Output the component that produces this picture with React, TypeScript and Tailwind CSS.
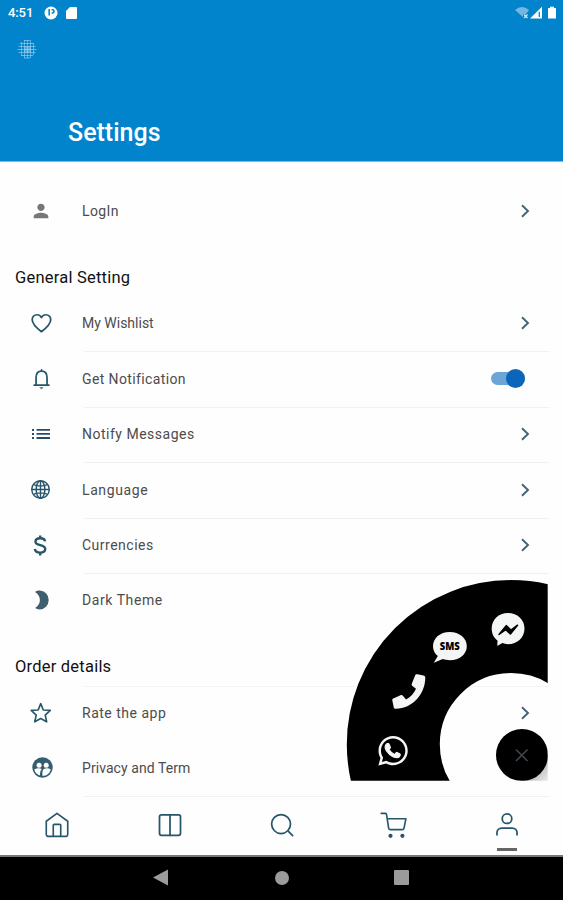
import type { ReactNode } from "react";
import { MdPerson } from "react-icons/md";

const ink = "#27566b";

function Chevron() {
  return (
    <svg className="mr-[33px] h-[14px] w-[9px]" viewBox="0 0 9 14" fill="none" stroke="#3f6474" strokeWidth="1.9">
      <path d="M1 1.2 7 7 1 12.8" />
    </svg>
  );
}

function Toggle() {
  return (
    <div className="mr-[38px] flex h-[19px] w-[34px] items-center rounded-full">
      <div className="flex h-[13px] w-[34px] items-center justify-end rounded-full bg-[#6da5d6]">
        <div className="h-[19px] w-[19px] shrink-0 rounded-full bg-[#0b66ba]" />
      </div>
    </div>
  );
}

function Row({ icon, label, end, height, width, line = true }: { icon: ReactNode; label: string; end?: ReactNode; height: string; width: string; line?: boolean }) {
  return (
    <div className={`flex ${height}`}>
      <div className="flex w-[82px] shrink-0 items-center justify-center pb-[3px]">{icon}</div>
      <div className={`ml-[2px] mr-[14px] flex flex-1 items-center justify-between border-b pb-[2px] ${line ? "border-[#f1f1f1]" : "border-transparent"}`}>
        <span className={`-ml-[2px] whitespace-nowrap text-[14px] leading-none text-[#4c4c4c] ${width}`}>{label}</span>
        <div className="-mr-[14px]">{end}</div>
      </div>
    </div>
  );
}

function Line({ children, size = "h-[22px] w-[22px]", sw = 1.6 }: { children: ReactNode; size?: string; sw?: number }) {
  return (
    <svg className={size} viewBox="0 0 24 24" fill="none" stroke={ink} strokeWidth={sw} strokeLinecap="round" strokeLinejoin="round">
      {children}
    </svg>
  );
}

const Heart = () => (
  <Line sw={1.9}>
    <path d="M12.5 21.5 C7 17.2 2.4 13.1 2.4 8.4 A5.2 5.2 0 0 1 7.7 3 C9.8 3 11.5 4.2 12.5 6 C13.5 4.2 15.2 3 17.3 3 A5.2 5.2 0 0 1 22.6 8.4 C22.6 13.1 18 17.2 12.5 21.5Z" />
  </Line>
);
const Bell = () => (
  <Line sw={1.9}>
    <path d="M4.6 18.8h16 M6.6 18.8 V10.5 C6.6 6.2 8.9 3.4 12.6 3.4 S18.6 6.2 18.6 10.5 V18.8 M12.6 3.4V2" />
    <path d="M11 21.4h3.2l-1.6 1.3z" fill={ink} strokeWidth=".5" />
  </Line>
);
const List = () => (
  <svg className="h-[12px] w-[18px]" viewBox="0 0 18 12" fill="#284c70">
    <path d="M0 1h2v2H0zM0 5h2v2H0zM0 9h2v2H0zM4.5 1H18v1.7H4.5zM4.5 5H18v1.7H4.5zM4.5 9H18v2H4.5z" />
  </svg>
);
const Globe = () => (
  <Line size="mr-px h-[21px] w-[21px]" sw={1.6}>
    <circle cx="12" cy="12" r="10" />
    <ellipse cx="12" cy="12" rx="5" ry="10" />
    <path d="M12 2v20M2 12h20M4 6.5c5 2 11 2 16 0M4 17.5c5-2 11-2 16 0" />
  </Line>
);
const Dollar = () => (
  <svg className="mr-[2px] h-[21px] w-[14px]" viewBox="0 0 14 21" fill="none" stroke={ink} strokeWidth="2.4">
    <path d="M12 6.4C11.8 4.3 10 3.3 7.2 3.3 4.6 3.3 2.5 4.5 2.5 6.7 2.5 11.5 12.2 8.8 12.2 14 12.2 16.4 10 17.6 7.2 17.6 4.2 17.6 2.2 16.3 1.8 14" />
    <path d="M7.2 .4v3.2M7.2 17v3.6" />
  </svg>
);
const Moon = () => (
  <svg className="ml-[1px] h-[20px] w-[14px]" viewBox="0 0 14 20" fill="#405f6e">
    <path d="M0 2C1.4 1 3 .6 4.6.6A9.1 9.4 0 0 1 4.6 19.4C3 19.4 1.4 18.9 0 18 3 16.2 4.9 13.3 4.9 10S3 3.8 0 2Z" />
  </svg>
);
const Star = () => (
  <Line sw={1.8}>
    <path d="M11.7 1.8 14.5 8.7 22.1 9.2 16.6 14.2 18.2 21.6 11.7 18 5.2 21.6 6.8 14.2 1.3 9.2 8.9 8.7Z" />
  </Line>
);
const People = () => (
  <svg className="ml-[2px] h-[21px] w-[21px]" viewBox="0 0 21 21">
    <circle cx="10.5" cy="10.5" r="10.2" fill="#355d70" />
    <g fill="#fff">
      <circle cx="7.1" cy="8.2" r="2.5" />
      <circle cx="14.2" cy="8.2" r="2.5" />
      <path d="M2.3 12.4C4.5 11 8 11 9.8 12 8.3 13.5 8 15.5 8 18.4 5 17.5 2.8 15.4 2.3 12.4Z" />
      <path d="M18.7 12.4C16.5 11 13.8 11.2 12 12 10.8 12.8 10.2 14.3 10.4 18.8 14.7 18.8 18 16.2 18.7 12.4Z" />
    </g>
  </svg>
);

function ContactMenu() {
  return (
    <svg className="absolute left-[346px] top-[578px] h-[204px] w-[203px]" viewBox="346 578 203 204">
      <defs>
        <clipPath id="menu"><path d="M346 578H547.7V780.7H346Z" /></clipPath>
        <linearGradient id="corner" x1="0" y1="0" x2="1" y2="1">
          <stop offset="0.5" stopColor="#b4b4b4" />
          <stop offset="1" stopColor="#ececec" />
        </linearGradient>
      </defs>
      <g clipPath="url(#menu)">
        <circle cx="511" cy="744.3" r="117.7" fill="none" stroke="#000" strokeWidth="93" />
        <path d="M522 781H548V755Z" fill="url(#corner)" />
        <circle cx="522" cy="755" r="26" fill="#000" />
      </g>
      <path d="M516 749.5 527.5 761M527.5 749.5 516 761" stroke="#40484b" strokeWidth="1.6" />
      <g fill="#f4f5f5">
        <path d="M508 613C498.4 613 491.7 619.8 491.7 628.5 491.7 634 494 638 497.5 640.5L497.3 646 502.3 643.1C504 643.8 506 644.2 508 644.2 517.4 644.2 524.5 637.4 524.5 628.5S517.4 613 508 613Z" />
        <path d="M449.7 632C440 632 433 638.2 433 646.4 433 650.3 435 653.8 437.8 656L433.8 662.7 442.8 659.1C445 659.9 447.3 660.2 449.8 660.2 459.5 660.2 466.8 654.2 466.8 646.2S459.5 632 449.7 632Z" />
        <path d="M417.5 674.3 423.5 675.6C424.7 675.9 425.3 676.7 425.3 678 424.9 694.8 412.3 708.3 396 708.8 394.7 708.8 394 708.3 393.7 707.2L392.3 700.3C392.1 699.4 392.5 698.7 393.3 698.4L400.5 695.3C401.4 694.9 402.3 695.1 402.9 695.8L406 699.4C410.5 697.2 414 693.5 416 688.8L412.4 686C411.7 685.4 411.5 684.6 411.8 683.7L415.1 675.5C415.5 674.5 416.5 674 417.5 674.3Z" />
      </g>
      <path d="M499 634.4 506.2 625.6 511 630 517.5 625.2 510.4 634 505.7 629.6Z" fill="#000" stroke="#000" strokeWidth="1.5" strokeLinejoin="round" />
      <text x="449.8" y="650.2" textAnchor="middle" textLength="20" lengthAdjust="spacingAndGlyphs" className="font-['Open_Sans',sans-serif] text-[11px] font-extrabold" fill="#000">SMS</text>
      <g transform="translate(378.4 734) scale(.0655)" fill="#f4f5f5">
        <path d="M380.9 97.1C339 55.1 283.2 32 223.9 32c-122.4 0-222 99.6-222 222 0 39.1 10.2 77.3 29.6 111L0 480l117.7-30.9c32.4 17.7 68.9 27 106.1 27h.1c122.3 0 224.1-99.6 224.1-222 0-59.3-25.2-115-67.1-157zm-157 341.6c-33.2 0-65.7-8.9-94-25.7l-6.7-4-69.8 18.3L72 359.2l-4.4-7c-18.5-29.4-28.2-63.3-28.2-98.2 0-101.7 82.8-184.5 184.6-184.5 49.3 0 95.6 19.2 130.4 54.1 34.8 34.9 56.2 81.2 56.1 130.5 0 101.8-84.9 184.6-186.6 184.6z" />
        <path d="M325 301c-6-3-34-17-39-19-5-2-9-3-13 3-4 6-15 19-18 22-3 4-7 4-12 1-34-17-56-30-78-68-6-10 6-9 17-31 2-4 1-7-1-10-1-3-13-31-18-43-5-12-10-10-13-10h-12c-4 0-10 1-15 7-5 6-20 20-20 48s20 56 23 60c3 4 40 62 97 86 36 16 50 17 68 14 11-2 34-14 38-27 5-13 5-25 3-27-1-2-5-4-10-6z" stroke="#f4f5f5" strokeWidth="18" />
      </g>
    </svg>
  );
}

export default function App() {
  return (
    <div className="relative flex h-[900px] w-full flex-col overflow-hidden bg-[#fefefe] font-['Roboto',sans-serif]">
      <header className="flex h-[162px] shrink-0 flex-col border-b border-[#7bbbe2] bg-[#0284cc] text-white">
        <div className="flex h-[25px] items-center justify-between pl-[8px] pr-[6px]">
          <div className="flex items-center">
            <span className="w-[36px] text-[13px] font-medium leading-none tracking-[-0.1px]">4:51</span>
            <svg className="h-[14px] w-[14px]" viewBox="0 0 14 14">
              <circle cx="7" cy="7" r="6.5" fill="#fff" />
              <path d="M5.2 3V9.5M7.6 3.8h.8a1.6 1.6 0 0 1 0 3.2H7.6" stroke="#0284cc" strokeWidth="1.6" fill="none" />
            </svg>
            <svg className="ml-[8px] h-[12px] w-[11px]" viewBox="0 0 11 12" fill="#fff"><path d="M4 0h6a1 1 0 0 1 1 1v10a1 1 0 0 1-1 1H1a1 1 0 0 1-1-1V4Z" /></svg>
          </div>
          <svg className="h-[14px] w-[42px]" viewBox="0 0 42 14">
            <path d="M0 4Q7-2 14 4L11 8H8V11Z" fill="#72b8e0" />
            <path d="m9 8.5 3.5 3.5m0-3.5L9 12" stroke="#d8edf7" strokeWidth="1.2" />
            <path d="M15 12.5 27 .7V12.5Z" fill="#fff" />
            <path d="M24.3 5.8V11" stroke="#0284cc" strokeWidth="1.3" />
            <path d="M33 2h2V.8h4V2h2v10.5h-8Z" fill="#fff" />
          </svg>
        </div>
        <svg className="ml-[17px] mt-[14px] h-[20px] w-[20px]" viewBox="0 0 20 20" stroke="#a9d5ef" fill="none">
          <path d="M7 1.5h6M3 4.5h14M1.5 7.5h17M.5 10.5h19M1.5 13.5h17M4 16.5h12M7 19h6" strokeWidth="1" opacity=".6" />
          <path d="M4.5 3v14M7.5 1v18M10.5 1v18M13.5 1v18M16.5 4v12" strokeWidth="1" opacity=".5" />
          <path d="M7 10.5h7" strokeWidth="6" opacity=".45" />
        </svg>
        <h1 className="ml-[68px] mt-[58px] text-[25px] font-medium leading-[32px]">Settings</h1>
      </header>

      <main className="flex h-[635px] shrink-0 flex-col pt-[22px]">
        <Row icon={<MdPerson className="h-[22px] w-[22px] text-[#777]" />} label="LogIn" width="tracking-[0.4px]" height="h-[56px]" end={<Chevron />} line={false} />
        <h2 className="flex h-[56px] items-center pl-[15px] pt-[20px] text-[16.5px] leading-none tracking-[0.22px] text-[#111]">General Setting</h2>
        <Row icon={<Heart />} label="My Wishlist" width="tracking-[0px]" height="h-[56px]" end={<Chevron />} />
        <Row icon={<Bell />} label="Get Notification" width="tracking-[0.38px]" height="h-[56px]" end={<Toggle />} />
        <Row icon={<List />} label="Notify Messages" width="tracking-[0.5px]" height="h-[55px]" end={<Chevron />} />
        <Row icon={<Globe />} label="Language" width="tracking-[0.6px]" height="h-[56px]" end={<Chevron />} />
        <Row icon={<Dollar />} label="Currencies" width="tracking-[0.5px]" height="h-[55px]" end={<Chevron />} />
        <Row icon={<Moon />} label="Dark Theme" width="tracking-[0.57px]" height="h-[55px]" line={false} />
        <h2 className="flex h-[57px] items-center pl-[15px] pt-[19px] text-[16.5px] leading-none tracking-[0.22px] text-[#111]">Order details</h2>
        <div className="ml-[84px] mr-[14px] h-px bg-[#f3f3f3]" />
        <Row icon={<Star />} label="Rate the app" width="tracking-[0.5px]" height="h-[54px]" end={<Chevron />} line={false} />
        <Row icon={<People />} label="Privacy and Term" width="tracking-[0.07px]" height="h-[56px]" />
      </main>

      <nav className="grid h-[58px] shrink-0 grid-cols-5 justify-items-center pl-px pt-[14px]">
        <Line size="h-[28px] w-[28px]" sw={1.4}><path d="M2.8 8.8 12 2l9.2 6.8V20a1.8 1.8 0 0 1-1.8 1.8H4.6A1.8 1.8 0 0 1 2.8 20ZM8.8 21.5v-9.2q0-.8.8-.8h4.8q.8 0 .8.8v9.2" /></Line>
        <Line size="h-[28px] w-[28px]" sw={1.5}><rect x="3" y="3.4" width="18" height="17.4" rx="1.7" /><path d="M12 3.4v17.4" /></Line>
        <Line size="h-[28px] w-[28px]" sw={1.5}><circle cx="11.2" cy="11.2" r="8.1" /><path d="m17.3 17.3 3.8 3.8" /></Line>
        <Line size="h-[28px] w-[28px]" sw={1.4}><path d="M1 2h3.6q.9 0 1 .9L7.4 14.6a1.7 1.7 0 0 0 1.7 1.4h9.8a1.7 1.7 0 0 0 1.7-1.4L22.2 6.6H6.2" /><circle cx="9" cy="21.3" r="1.1" fill={ink} /><circle cx="19.2" cy="21.3" r="1.1" fill={ink} /></Line>
        <div className="flex flex-col items-center">
          <Line size="h-[28px] w-[28px]" sw={1.5}><circle cx="12" cy="6.6" r="4.1" /><path d="M3.4 20.4v-1.7a4.1 4.1 0 0 1 4.1-4.1h9a4.1 4.1 0 0 1 4.1 4.1v1.7" /></Line>
          <div className="mt-[9px] h-[3px] w-[20px] bg-[#666]" />
        </div>
      </nav>

      <footer className="flex h-[45px] shrink-0 items-center border-t-2 border-[#777] bg-black pb-[2px] pl-[153px]">
        <svg className="h-[17px] w-[15px]" viewBox="0 0 15 17" fill="#9b9b9b"><path d="M0 8.5 15 .5v16Z" /></svg>
        <div className="ml-[107px] h-[14px] w-[14px] rounded-full bg-[#9b9b9b]" />
        <div className="ml-[105px] h-[15px] w-[15px] rounded-[1px] bg-[#9b9b9b]" />
      </footer>
      <ContactMenu />
    </div>
  );
}
